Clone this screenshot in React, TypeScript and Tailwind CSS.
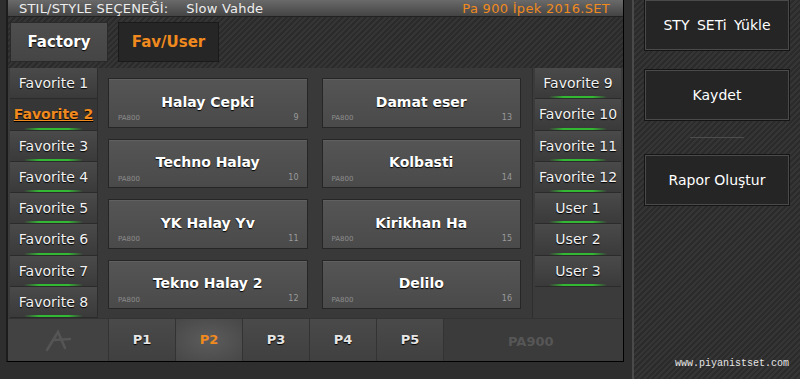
import React from "react";

const leftFavs = ["Favorite 1", "Favorite 2", "Favorite 3", "Favorite 4", "Favorite 5", "Favorite 6", "Favorite 7", "Favorite 8"];
const rightFavs = ["Favorite 9", "Favorite 10", "Favorite 11", "Favorite 12", "User 1", "User 2", "User 3"];
const styles = [
  ["Halay Cepki", 9],
  ["Damat eser", 13],
  ["Techno Halay", 10],
  ["Kolbasti", 14],
  ["YK Halay Yv", 11],
  ["Kirikhan Ha", 15],
  ["Tekno Halay 2", 12],
  ["Delilo", 16],
] as const;
const pages = ["P1", "P2", "P3", "P4", "P5"];

function ListItem({ label, active, green }: { label: string; active?: boolean; green?: boolean }) {
  return (
    <div
      className={`relative h-[31.25px] flex items-center justify-center border-b border-[#2b2b2b] text-[14px] ${
        active
          ? "bg-[#363636] text-[#f08a1e] font-bold underline"
          : "bg-[linear-gradient(180deg,#4a4a4a,#3a3a3a)] text-[#f2f2f2]"
      } [text-shadow:0_1px_1px_#000]`}
    >
      <span className="mt-[1px]">{label}</span>
      {green && (
        <span className="absolute bottom-0 left-[14px] right-[14px] h-[2px] bg-[linear-gradient(90deg,transparent,#33b833_25%,#33b833_75%,transparent)]" />
      )}
    </div>
  );
}

function StyleButton({ name, num }: { name: string; num: number }) {
  return (
    <div className="relative h-[49.5px] border border-[#262626] bg-[linear-gradient(180deg,#555555,#4a4a4a)] shadow-[inset_0_1px_0_#606060] flex items-center justify-center">
      <span className="text-[14px] font-bold text-white [text-shadow:0_1px_1px_#000] -mt-[1px]">{name}</span>
      <span className="absolute left-[9px] bottom-[3px] text-[7px] text-[#8c8c8c]">PA800</span>
      <span className="absolute right-[8px] bottom-[3px] text-[8px] text-[#9a9a9a]">{num}</span>
    </div>
  );
}

const texture =
  "bg-[repeating-linear-gradient(135deg,#2b2b2b_0px,#2b2b2b_2px,#353535_2px,#353535_4px)]";

export default function App() {
  return (
    <div className="w-[800px] h-[379px] flex overflow-hidden bg-[#2e2e2e] font-['DejaVu_Sans',sans-serif]">
      {/* main panel */}
      <div className="w-[632px] flex flex-col pl-[6px] pr-[8px]">
        <div className="h-[362px] flex flex-col border-l-2 border-l-[#1c1c1c] border-r border-r-black border-b border-b-black bg-[#3b3b3b]">
          {/* title bar */}
          <div className="h-[17px] flex items-center justify-between pl-[11px] pr-[13px] bg-[linear-gradient(180deg,#6a6a6a,#444444)] border-b border-[#222] text-[13px] leading-none">
            <span className="text-[#eeeeee] tracking-[0.2px]">
              STIL/STYLE SEÇENEĞİ:<span className="ml-[18px]">Slow Vahde</span>
            </span>
            <span className="text-[#f08a1e] tracking-[0.3px]">Pa 900 İpek 2016.SET</span>
          </div>

          {/* tabs */}
          <div className={`h-[51px] flex gap-[10px] pl-[2px] pt-[5px] ${texture}`}>
            <div className="w-[98px] h-[40px] flex items-center justify-center bg-[linear-gradient(180deg,#4e4e4e,#454545)] border border-[#2a2a2a] text-[15px] font-bold text-white [text-shadow:0_1px_1px_#000]">
              Factory
            </div>
            <div className="w-[101px] h-[40px] flex items-center justify-center bg-[#262626] border border-[#1a1a1a] text-[15px] font-bold text-[#f08a1e]">
              Fav/User
            </div>
          </div>

          {/* middle */}
          <div className="h-[250px] flex pl-[2px]">
            <div className="w-[87px] flex flex-col">
              {leftFavs.map((f, i) => (
                <ListItem key={f} label={f} active={i === 1} green={i !== 0} />
              ))}
            </div>
            <div className="w-[436px] bg-[#393939] border-l border-[#2c2c2c] border-r border-r-[#2e2e2e] grid grid-cols-2 gap-x-[14px] gap-y-[11px] pl-[10px] pr-[11px] py-[10px]">
              {styles.map(([n, k]) => (
                <StyleButton key={n} name={n} num={k} />
              ))}
            </div>
            <div className="w-[86px] ml-[2px] flex flex-col">
              {rightFavs.map((f) => (
                <ListItem key={f} label={f} green />
              ))}
            </div>
          </div>

          {/* bottom bar */}
          <div className="h-[43px] flex border-t border-[#333]">
            <div className="w-[101px] flex items-center justify-center bg-[#424242] border-r border-[#333]">
              <svg width="30" height="24" viewBox="0 0 30 24" fill="none" stroke="#555555" strokeWidth="2.5" strokeLinecap="round">
                <path d="M4 22 L15 4 L22 20" />
                <path d="M12 12 L27 11" />
              </svg>
            </div>
            {pages.map((p) => (
              <div
                key={p}
                className={`w-[67px] flex items-center justify-center border-r border-[#333] text-[13px] font-bold ${
                  p === "P2"
                    ? "bg-[radial-gradient(ellipse_at_center,#5c5c5c,#474747)] text-[#f08a1e]"
                    : "bg-[linear-gradient(180deg,#4a4a4a,#404040)] text-[#e6e6e6] [text-shadow:0_1px_1px_#000]"
                }`}
              >
                {p}
              </div>
            ))}
            <div className="flex-1 flex items-center pl-[64px] pt-[4px] bg-[#3b3b3b] text-[13px] font-bold text-[#565656]">
              PA900
            </div>
          </div>
        </div>
      </div>

      {/* right side panel */}
      <div className={`relative w-[168px] h-full border-l-2 border-[#4a4a4a] flex flex-col pl-[11px] pr-[11px] ${texture}`}>
        <div className="h-[50px] flex items-center justify-center bg-[#252525] border border-[#4a4a4a] shadow-[0_0_0_1px_#151515] text-[14px] text-white [word-spacing:3px]">
          STY SETi Yükle
        </div>
        <div className="mt-[20px] h-[50px] flex items-center justify-center bg-[#252525] border border-[#4a4a4a] shadow-[0_0_0_1px_#151515] text-[14px] text-white">
          Kaydet
        </div>
        <div className="mt-[17px] mx-[45px] h-px bg-[#4d4d4d]" />
        <div className="mt-[17px] h-[50px] flex items-center justify-center bg-[#252525] border border-[#4a4a4a] shadow-[0_0_0_1px_#151515] text-[14px] text-white">
          Rapor Oluştur
        </div>
        <div className="absolute right-[11px] bottom-[8px] font-['Liberation_Mono',monospace] text-[10px] text-[#e6e6e6]">
          www.piyanistset.com
        </div>
      </div>
    </div>
  );
}
